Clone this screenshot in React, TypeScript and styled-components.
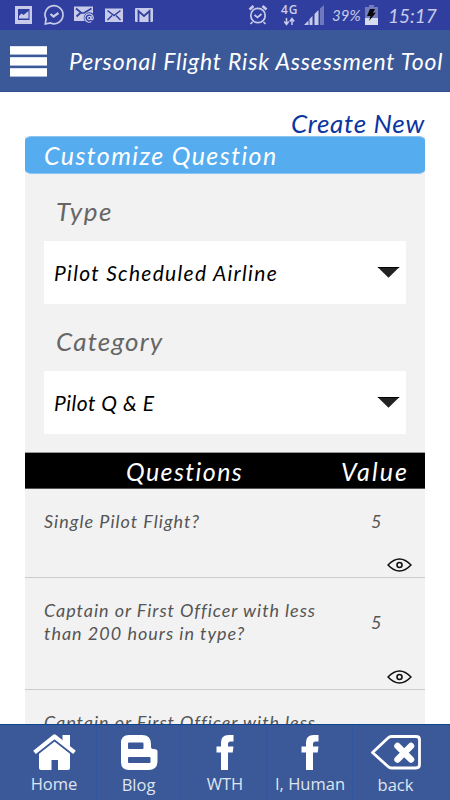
import React from "react";
import styled, { createGlobalStyle } from "styled-components";

const GlobalStyle = createGlobalStyle`
  * { box-sizing: border-box; }
  body { margin: 0; background: #fff; overflow: hidden; }
  svg { display: block; flex: none; }
`;

const Screen = styled.div`
  width: 450px;
  height: 800px;
  display: flex;
  flex-direction: column;
  overflow: hidden;
  background: #fff;
  font-family: Lato, "Open Sans", sans-serif;
  font-style: italic;
`;

const Text = styled.span<{ $size: number; $track?: number; $color?: string; $line?: number }>`
  font-size: ${(p) => p.$size}px;
  letter-spacing: ${(p) => p.$track ?? 0}px;
  color: ${(p) => p.$color ?? "#fff"};
  line-height: ${(p) => p.$line ?? 30}px;
  white-space: pre;
`;

const StatusBar = styled.div`
  height: 30px;
  flex: none;
  background: #303f9f;
  padding-left: 15px;
  display: flex;
`;

const Percent = styled.div`
  width: 33px;
  flex: none;
`;

const Clock = styled.div`
  padding-left: 9px;
`;

const AppBar = styled.header`
  height: 62px;
  flex: none;
  background: #3b5998;
  border-bottom: 1px solid #2d5093;
  display: flex;
  align-items: flex-start;
  padding: 16px 0 0 10px;
`;

const MenuButton = styled.button`
  width: 37px;
  height: 31px;
  flex: none;
  border: 0;
  padding: 0;
  margin-right: 22px;
  background: none;
  display: flex;
  flex-direction: column;
  gap: 2px;
`;

const MenuLine = styled.i`
  height: 9px;
  width: 37px;
  background: #fff;
  border-top: 1px solid #dbe2f0;
  border-bottom: 1px solid #a9b8d8;
`;

const Content = styled.main`
  flex: 1;
  min-height: 0;
  overflow: hidden;
  padding: 17px 25px 0;
  display: flex;
  flex-direction: column;
`;

const CreateLink = styled.a`
  height: 27px;
  flex: none;
  display: flex;
  justify-content: flex-end;
`;

const Panel = styled.section`
  background: #f2f2f2;
  height: 316px;
  flex: none;
`;

const PanelTitle = styled.h2`
  margin: 0;
  height: 38px;
  border-radius: 7px / 4px;
  border-top: 1px solid #8cc4ef;
  border-bottom: 1px solid #8cc4ef;
  background: #55acee;
  padding: 3px 0 0 19px;
  font-weight: 400;
  display: flex;
`;

const Field = styled.div`
  padding: 22px 19px 0;
  display: flex;
  flex-direction: column;
`;

const Label = styled.label`
  padding-left: 12px;
  height: 45px;
  display: flex;
`;

const Select = styled.div`
  height: 63px;
  background: #fff;
  padding: 0 6px 0 10px;
  display: flex;
  justify-content: space-between;
  align-items: center;
`;

const TableHead = styled.div`
  height: 37px;
  flex: none;
  background: #000;
  border-top: 1px solid #999;
  border-bottom: 1px solid #555;
  display: grid;
  grid-template-columns: 316px 84px;
  padding-top: 3px;
`;

const HeadCell = styled.div<{ $indent: number }>`
  padding-left: ${(p) => p.$indent}px;
`;

const Row = styled.div<{ $height: number }>`
  height: ${(p) => p.$height}px;
  flex: none;
  background: #f2f2f2;
  border-bottom: 1px solid #ccc;
  display: grid;
  grid-template-columns: 346px 54px;
  padding-top: 21px;
`;

const Question = styled.div`
  padding-left: 19px;
  display: flex;
  flex-direction: column;
`;

const ValueCell = styled.div<{ $top: number }>`
  padding: ${(p) => p.$top}px 13px 5px 0;
  display: flex;
  flex-direction: column;
  justify-content: space-between;
`;

const Eye = styled.svg`
  align-self: flex-end;
`;

const Footer = styled.nav`
  height: 76px;
  flex: none;
  background: #3b5998;
  border-top: 1px solid #0e448e;
  display: grid;
  grid-template-columns: 97px 84px 86px 86px 97px;
  font-family: "Open Sans", sans-serif;
  font-style: normal;
`;

const Tab = styled.div<{ $left: number; $right: number; $drop: number }>`
  border-right: 1px solid #3155a0;
  display: flex;
  flex-direction: column;
  align-items: center;
  padding: 8px ${(p) => p.$right}px 0 ${(p) => p.$left}px;
  gap: ${(p) => p.$drop}px;
  &:last-child { border-right: 0; }
`;

const tint = "#c7cbe9";
const ink = "#555";

function StatusIcons() {
  return (
    <svg width="317" height="30" viewBox="15 0 317 30" fill="none">
      <path d="M15 6h17v18H15z" fill={tint} />
      <path d="M18 9h11.500v11H18z" fill="#303f9f" />
      <path d="M19 18.500v-2.500l2.500-2.500 2 1.500 5-4v7.500z" fill={tint} />
      <path d="M45.300 24l.8-5A9 9 0 1 1 50.500 23z" stroke={tint} strokeWidth="1.700" />
      <path d="M50.500 14l3 2.500 5-3.500" stroke={tint} strokeWidth="2.200" />
      <path d="M74 6.500h19v9h-5l-3 5.500H74z" fill={tint} />
      <path d="M76 8.500l5 4-4.500 4M91.500 8.500l-7.500 4.500h-3" stroke="#303f9f" strokeWidth="1.700" />
      <circle cx="89.500" cy="18" r="5.800" fill="#303f9f" />
      <circle cx="89.300" cy="18" r="1.700" stroke={tint} strokeWidth="1.200" />
      <path d="M91.100 16v3.200q2 1.300 2.200-1.300a4.200 4.200 0 1 0-2 3.700" stroke={tint} strokeWidth="1.200" />
      <path d="M105 8.500h18V22h-18z" fill={tint} />
      <path d="M107.500 10.500l6.500 5 6.500-5M107.500 20l4.500-4.500M120.500 20l-4.500-4.500" stroke="#303f9f" strokeWidth="1.500" />
      <rect x="135" y="8" width="18" height="14" rx="1" fill={tint} />
      <path d="M138.500 22V11l5.500 5 5.500-5v11" stroke="#303f9f" strokeWidth="1.800" />
      <circle cx="258" cy="15.500" r="7.200" stroke={tint} strokeWidth="1.700" />
      <path d="M254.500 15l3 2.500 4-3.500M252.500 22l-2 2M263.500 22l2 2" stroke={tint} strokeWidth="1.700" />
      <path d="M249.500 9.500l4-3.500M266.500 9.500l-4-3.500" stroke={tint} strokeWidth="2.600" />
      <text x="281" y="13.800" fill={tint} fontFamily="Open Sans, sans-serif" fontStyle="normal" fontWeight="600" fontSize="12" textLength="16.500">4G</text>
      <path d="M286.500 18v6M284.300 21.500l2.200 3 2.200-3M292 25v-6M289.800 21.500l2.200-3 2.200 3" stroke={tint} strokeWidth="1.500" />
      <path d="M304 25l4.500-4.500V25z" fill={tint} />
      <path d="M309.500 25v-6l3-3v9zM314.500 25V14l4-4v15z" fill={tint} />
      <path d="M320 25V8.500L324 5v20z" fill="#6f79bd" />
    </svg>
  );
}

function Battery() {
  return (
    <svg width="14" height="30" viewBox="0 0 14 30">
      <path d="M4 5h5v2h4v18H0V7h4z" fill="#727bbb" />
      <path d="M0 18h13v7H0z" fill="#d8dcf1" />
      <path d="M5 9h5l-2 4 3-.5-7 8.500 1.500-5H2z" fill="#080808" />
    </svg>
  );
}

function Arrow() {
  return (
    <svg width="23" height="11" viewBox="0 0 23 11">
      <path d="M.5 0h22L11.500 10.800z" fill="#222" />
      <path d="M.5 0h22l-1 1h-20z" fill="#000" />
    </svg>
  );
}

function EyeIcon() {
  return (
    <Eye width="25" height="14" viewBox="0 0 25 14" fill="none" stroke="#111">
      <path d="M1 7Q12.500-5 24 7Q12.500 19 1 7z" strokeWidth="1.500" strokeLinejoin="round" />
      <circle cx="12.500" cy="7" r="2.500" strokeWidth="1.600" />
    </Eye>
  );
}

function HomeIcon() {
  return (
    <svg width="45" height="38" viewBox="0 0 45 38">
      <path fill="#fff" d="M30.500 2H38v15l-7.500-5z" />
      <path fill="#fff" d="M7 20L22.500 7.500 38 20v15q0 2-2 2H26V27h-6.500v10H9q-2 0-2-2z" />
      <path d="M2.500 21.500L22.500 5.800 42.500 21.500" fill="none" stroke="#3b5998" strokeWidth="4.500" />
      <path d="M2.500 19.300L22.500 3.500 42.500 19.300" fill="none" stroke="#fff" strokeWidth="4.200" strokeLinejoin="round" />
    </svg>
  );
}

function BlogIcon() {
  return (
    <svg width="38" height="38" viewBox="0 0 38 38">
      <path fill="#fff" fillRule="evenodd" d="M9 2h13q9 0 9 9v3q0 2 3 2 3.500 0 3.500 2.500V28q0 9-9 9H9q-8 0-8-8V10q0-8 8-8zM9 9.500q-1 0-1 1v4.500q0 1 1 1h13.500q1 0 1-1v-4.500q0-1-1-1zM9 24q-1 0-1 1v4q0 1 1 1h20.500q1 0 1-1v-4q0-1-1-1z" />
    </svg>
  );
}

function FacebookIcon() {
  return (
    <svg width="18" height="38" viewBox="0 0 18 38">
      <path fill="#fff" d="M5 37V19.500H.5v-6H5V9.500Q5 2 12.500 2h5v6.500H14.500Q12 8.500 12 11v2.500h5.500l-.8 6H12V37z" />
    </svg>
  );
}

function BackIcon() {
  return (
    <svg width="52" height="38" viewBox="0 0 52 38" fill="none" stroke="#fff">
      <path d="M2.500 19.500L18 5Q19.500 3.500 21.500 3.500H46q3.500 0 3.500 3v25q0 3.500-3.500 3.500H21.500q-2 0-3.500-1.500z" strokeWidth="2.800" strokeLinejoin="round" />
      <path d="M27.500 13L41 26.500M41 13L27.500 26.500" strokeWidth="6.500" strokeLinecap="round" />
    </svg>
  );
}

const rows = [
  { height: 89, lines: [{ text: "Single Pilot Flight?", track: 1 }], top: 0, value: "5" },
  {
    height: 112,
    lines: [
      { text: "Captain or First Officer with less", track: 0.95 },
      { text: "than 200 hours in type?", track: 1 },
    ],
    top: 12,
    value: "5",
  },
  { height: 112, lines: [{ text: "Captain or First Officer with less", track: 0.95 }], top: 12, value: "" },
];

const tabs = [
  { name: "Home", icon: <HomeIcon />, left: 12, right: 0, drop: 0 },
  { name: "Blog", icon: <BlogIcon />, left: 0, right: 0, drop: 1 },
  { name: "WTH", icon: <FacebookIcon />, left: 3, right: 0, drop: 0 },
  { name: "I, Human", icon: <FacebookIcon />, left: 1, right: 0, drop: 0 },
  { name: "back", icon: <BackIcon />, left: 0, right: 12, drop: 1 },
];

export default function App() {
  return (
    <Screen>
      <GlobalStyle />
      <StatusBar>
        <StatusIcons />
        <Percent><Text $size={15} $color={tint}>39%</Text></Percent>
        <Battery />
        <Clock><Text $size={19} $line={32} $color={tint}>15:17</Text></Clock>
      </StatusBar>
      <AppBar>
        <MenuButton aria-label="Menu"><MenuLine /><MenuLine /><MenuLine /></MenuButton>
        <Text $size={23} $line={31} $track={0.82}>Personal Flight Risk Assessment Tool</Text>
      </AppBar>
      <Content>
        <CreateLink><Text $size={26} $line={29} $color="#0b35a0" $track={0.7}>Create New</Text></CreateLink>
        <Panel>
          <PanelTitle><Text $size={25} $track={1.4}>Customize Question</Text></PanelTitle>
          <Field>
            <Label><Text $size={26} $color="#666" $track={1.5}>Type</Text></Label>
            <Select><Text $size={21} $color="#000" $track={1.3}>Pilot Scheduled Airline</Text><Arrow /></Select>
          </Field>
          <Field>
            <Label><Text $size={26} $color="#666" $track={1.2}>Category</Text></Label>
            <Select><Text $size={21} $color="#000" $track={0.5}>Pilot Q &amp; E</Text><Arrow /></Select>
          </Field>
        </Panel>
        <TableHead>
          <HeadCell $indent={101}><Text $size={25} $track={1.4}>Questions</Text></HeadCell>
          <HeadCell $indent={0}><Text $size={25} $track={2.1}>Value</Text></HeadCell>
        </TableHead>
        {rows.map((row, i) => (
          <Row key={i} $height={row.height}>
            <Question>
              {row.lines.map((line) => (
                <Text key={line.text} $size={18} $line={22.5} $color={ink} $track={line.track}>{line.text}</Text>
              ))}
            </Question>
            <ValueCell $top={row.top}>
              <Text $size={18} $line={22.5} $color={ink}>{row.value}</Text>
              <EyeIcon />
            </ValueCell>
          </Row>
        ))}
      </Content>
      <Footer>
        {tabs.map((tab) => (
          <Tab key={tab.name} $left={tab.left} $right={tab.right} $drop={tab.drop}>
            {tab.icon}
            <Text $size={16.5} $line={26} $color="#dfe5f0">{tab.name}</Text>
          </Tab>
        ))}
      </Footer>
    </Screen>
  );
}
